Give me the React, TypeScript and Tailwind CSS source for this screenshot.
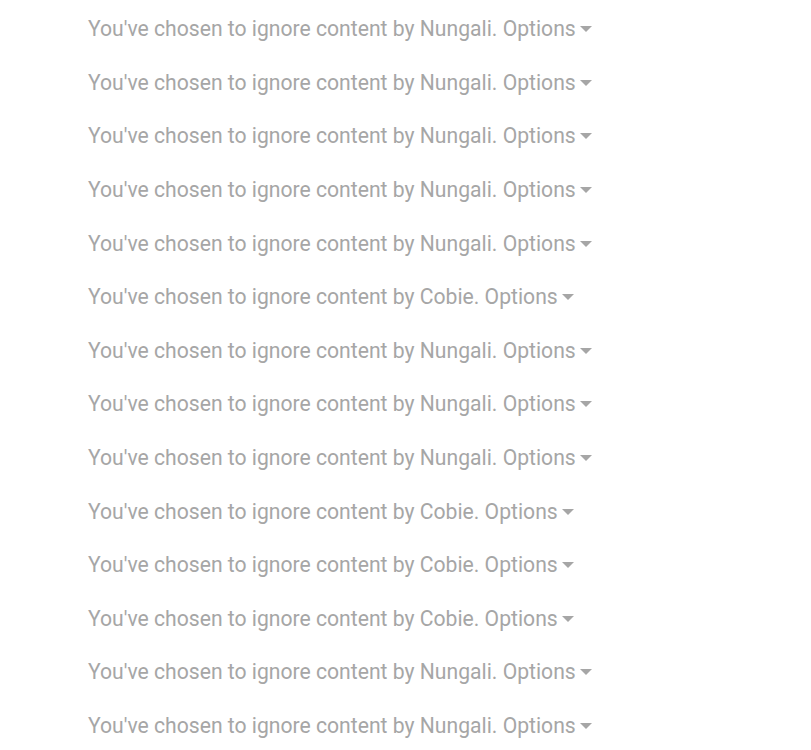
import React from "react";

const names = [
  "Nungali",
  "Nungali",
  "Nungali",
  "Nungali",
  "Nungali",
  "Cobie",
  "Nungali",
  "Nungali",
  "Nungali",
  "Cobie",
  "Cobie",
  "Cobie",
  "Nungali",
  "Nungali",
];

export default function App() {
  return (
    <div
      className="w-[811px] h-[750px] overflow-hidden bg-white pt-[2px]"
      style={{ fontFamily: "Roboto, 'Liberation Sans', sans-serif" }}
    >
      {names.map((n, i) => (
        <div
          key={i}
          className="h-[53.6px] flex items-center pl-[88px] text-[21.15px] text-[#a6a6a6] leading-none"
        >
          <span>You've chosen to ignore content by {n}. Options</span>
          <svg width="12" height="6" viewBox="0 0 12 6" className="ml-[4px] mt-[1px]">
            <path d="M0 0 L12 0 L6 6 Z" fill="#a6a6a6" />
          </svg>
        </div>
      ))}
    </div>
  );
}
